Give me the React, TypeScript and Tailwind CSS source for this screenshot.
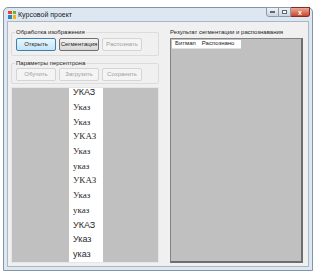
import React from "react";

const Btn = ({ label, active = false, disabled = false }: any) => (
  <div
    className={
      "h-[13px] w-[40px] flex items-center justify-center rounded-[2px] border text-[6px] " +
      (disabled
        ? "border-[#d4d4d4] bg-[#f4f4f4] text-[#a0a0a0]"
        : active
        ? "border-[#3c7fb1] bg-gradient-to-b from-[#eaf6fd] to-[#c4e3f7] text-[#222]"
        : "border-[#707070] bg-gradient-to-b from-[#f2f2f2] to-[#d8d8d8] text-[#222]")
    }
  >
    {label}
  </div>
);

const words = [
  { t: "УКАЗ", f: "sans" },
  { t: "Указ", f: "serif" },
  { t: "Указ", f: "serif" },
  { t: "УКАЗ", f: "serif" },
  { t: "Указ", f: "serif" },
  { t: "указ", f: "serif" },
  { t: "УКАЗ", f: "serif" },
  { t: "Указ", f: "serif" },
  { t: "указ", f: "serif" },
  { t: "УКАЗ", f: "sans" },
  { t: "Указ", f: "sans" },
  { t: "указ", f: "sans" },
];

export default function App() {
  return (
    <div
      className="w-[317px] h-[274px] bg-white pt-[7px] pl-[3px] overflow-hidden"
      style={{ fontFamily: '"Liberation Sans", Arial, sans-serif' }}
    >
      <div className="w-[310px] h-[264px] border border-[#8593a6] rounded-t-[5px] bg-[#dde7f2] flex flex-col">
        {/* title bar */}
        <div className="h-[16px] flex items-end pb-[1px] pl-[4px] relative">
          <div className="w-[8px] h-[8px] grid grid-cols-2 gap-[1px] mr-[2px] mb-[1px]">
            <div className="bg-[#e8462c]" />
            <div className="bg-[#6cb33e]" />
            <div className="bg-[#2d7fd0]" />
            <div className="bg-[#f5b400]" />
          </div>
          <span className="text-[7px] text-[#1a1a1a] leading-[10px]">Курсовой проект</span>
          <div className="absolute right-[2px] top-[-1px] flex">
            <div className="w-[13px] h-[10px] border border-[#8a99ab] rounded-bl-[3px] bg-gradient-to-b from-[#eef2f7] to-[#cbd6e3] flex items-center justify-center">
              <div className="w-[5px] h-[2px] border border-[#666] bg-white" />
            </div>
            <div className="w-[12px] h-[10px] border-y border-r border-[#8a99ab] bg-gradient-to-b from-[#eef2f7] to-[#cbd6e3] flex items-center justify-center">
              <div className="w-[5px] h-[4px] border border-[#666] bg-white" />
            </div>
            <div className="w-[19px] h-[10px] border-y border-r border-[#8b2a1c] rounded-br-[3px] bg-gradient-to-b from-[#e9a897] to-[#c8452e] flex items-center justify-center text-white text-[7px] font-bold leading-none">
              x
            </div>
          </div>
        </div>
        {/* client */}
        <div className="flex-1 mx-[3px] mb-[3px] border border-[#a9b6c6] bg-[#f0f0f0] flex gap-[11px] pl-[3px] pr-[5px] pb-[3px]">
          {/* left column */}
          <div className="w-[148px] flex flex-col">
            <div className="border border-[#dcdcdc] rounded-[2px] h-[24px] mt-[10px] relative px-[4px] pt-[5px]">
              <span className="absolute -top-[5px] left-[3px] bg-[#f0f0f0] px-[1px] text-[6px] leading-[8px] text-[#222]">
                Обработка изображения
              </span>
              <div className="flex gap-[3px]">
                <Btn label="Открыть" active />
                <Btn label="Сегментация" />
                <Btn label="Распознать" disabled />
              </div>
            </div>
            <div className="border border-[#dcdcdc] rounded-[2px] h-[21px] mt-[7px] relative px-[4px] pt-[4px]">
              <span className="absolute -top-[5px] left-[3px] bg-[#f0f0f0] px-[1px] text-[6px] leading-[8px] text-[#222]">
                Параметры персептрона
              </span>
              <div className="flex gap-[3px]">
                <Btn label="Обучить" disabled />
                <Btn label="Загрузить" disabled />
                <Btn label="Сохранить" disabled />
              </div>
            </div>
            <div className="flex-1 mt-[3px] bg-[#c0c0c0] border border-[#e6e6e6] flex overflow-hidden">
              <div className="w-[57px]" />
              <div className="w-[34px] bg-white flex flex-col pl-[4px] -mt-[2px]">
                {words.map((w, i) => (
                  <div
                    key={i}
                    className="h-[14.7px] shrink-0 flex items-center text-[9px] text-[#2a2a2a]"
                    style={{
                      fontFamily:
                        w.f === "serif"
                          ? '"Liberation Serif", serif'
                          : '"Liberation Sans", sans-serif',
                    }}
                  >
                    {w.t}
                  </div>
                ))}
              </div>
            </div>
          </div>
          {/* right column */}
          <div className="flex-1 flex flex-col pt-[6px]">
            <span className="text-[6px] leading-[8px] text-[#222] mb-[2px]">
              Результат сегментации и распознавания
            </span>
            <div className="flex-1 bg-[#c0c0c0] border border-[#828282] border-r-[2px] border-b-[2px] border-r-[#6e6e6e] border-b-[#6e6e6e] pt-[1px] pl-[1px]">
              <div className="w-[69px] h-[9px] bg-white flex items-center gap-[6px] pl-[3px] text-[6px] text-[#222] border-b border-[#e0e0e0]">
                <span>Битмап</span>
                <span>Распознано</span>
              </div>
            </div>
          </div>
        </div>
      </div>
    </div>
  );
}
